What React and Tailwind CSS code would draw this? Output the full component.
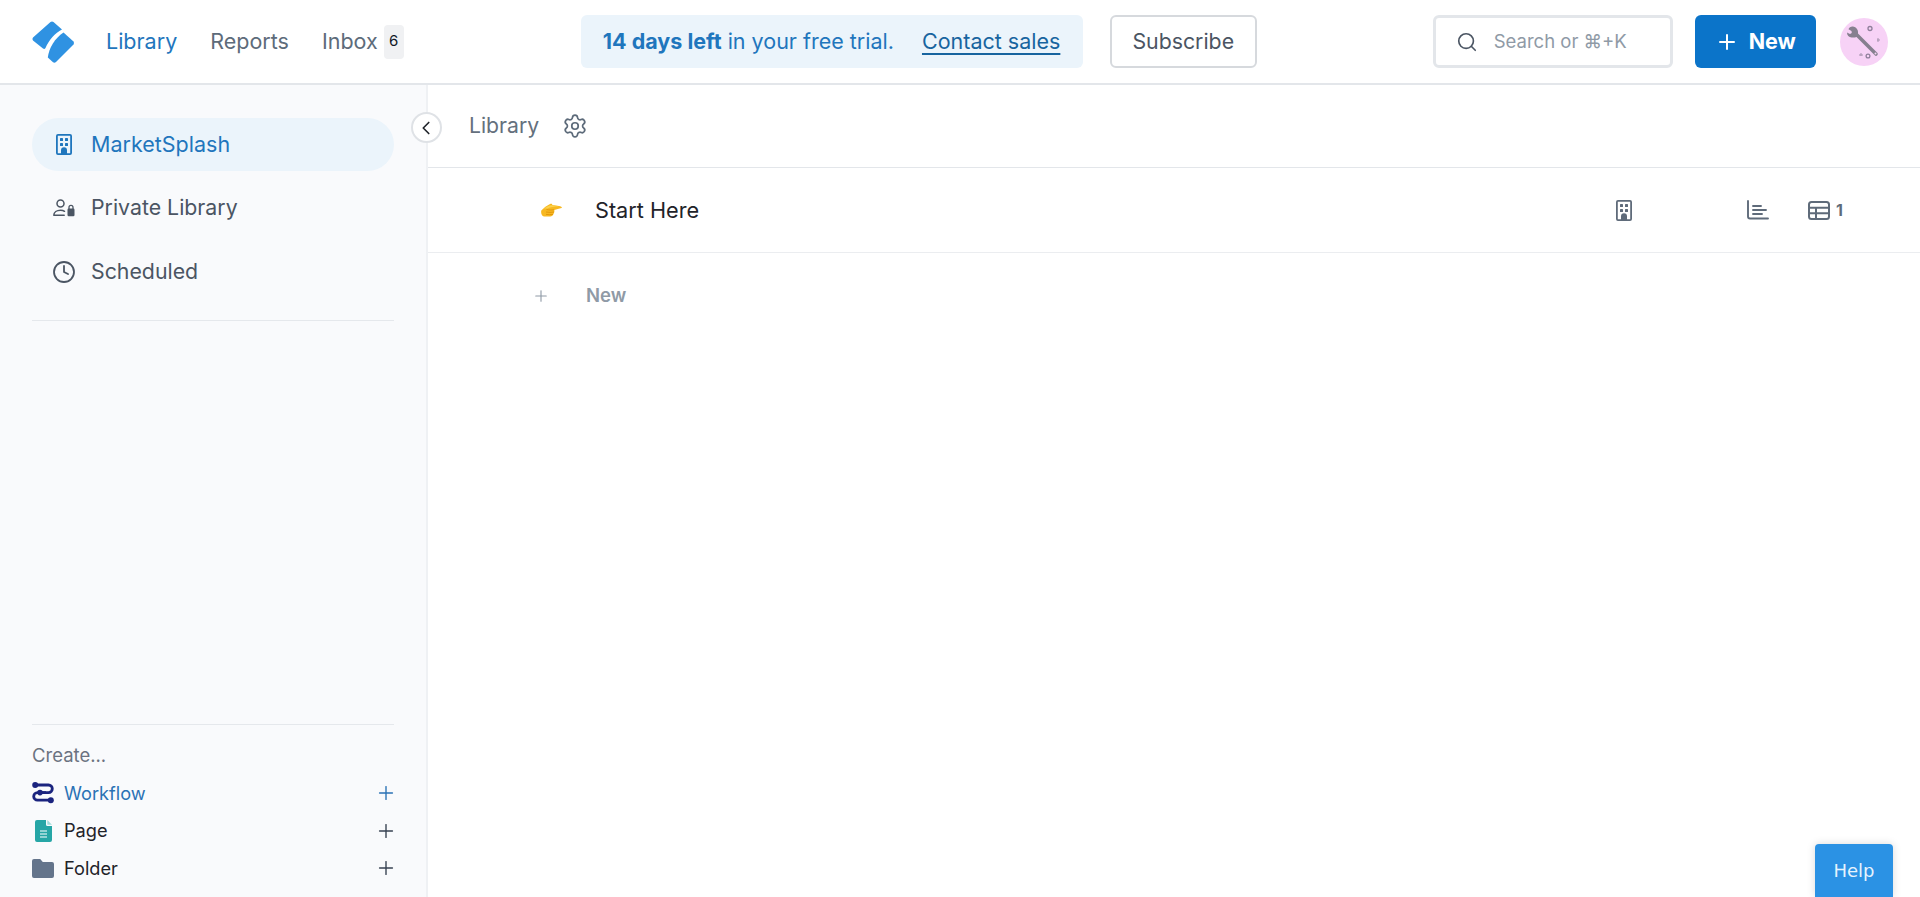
import React from 'react';
import { Plus, Search, Settings, ChevronLeft, Clock } from 'lucide-react';

const Logo = () => (
  <svg width="44" height="44" viewBox="0 0 44 44" fill="#2f92e2">
    <path d="M2 17.500 L19.500 2 Q21 1 22.500 2 L31 9.500 C24 13 18 20 14.500 28 Q13.500 29.500 12 28.500 L2 20.500 Q.8 19 2 17.500Z" />
    <path d="M32.500 12.500 L42.500 21.500 Q43.500 23 42.500 24.500 L25 42 Q23.500 43.200 22 42.200 L16.800 37.500 C18 28 24 18 32.500 12.500Z" />
  </svg>
);

const BuildingIcon = ({ className }) => (
  <svg className={className} viewBox="0 0 16 21" fill="currentColor">
    <path fillRule="evenodd" d="M2 0h12a2 2 0 0 1 2 2v17a2 2 0 0 1-2 2H2a2 2 0 0 1-2-2V2a2 2 0 0 1 2-2Zm0 1.800a.3.3 0 0 0-.2.2v17l.2.2h3v-3a3 3 0 0 1 6 0v3h3l.2-.2V2a.3.3 0 0 0-.2-.2H2Z" />
    <rect x="4" y="4" width="3" height="3" rx=".6" />
    <rect x="9" y="4" width="3" height="3" rx=".6" />
    <rect x="4" y="9" width="3" height="3" rx=".6" />
    <rect x="9" y="9" width="3" height="3" rx=".6" />
  </svg>
);

const PrivateIcon = () => (
  <svg width="22" height="18" viewBox="0 0 22 18" fill="none" stroke="#4b5563" strokeWidth="1.500">
    <circle cx="7.500" cy="4.500" r="3.500" />
    <path d="M.8 16.300c0-3 3-5 6.700-5 1.600 0 3 .3 4 1M.8 16.300h10.400" strokeLinecap="round" />
    <rect x="14.500" y="9.500" width="7" height="7.700" rx="1.200" fill="#4b5563" stroke="none" />
    <path d="M16 10V8.300a2 2 0 0 1 4 0V10" strokeWidth="1.300" />
  </svg>
);

const WorkflowIcon = () => (
  <svg width="22" height="22" viewBox="0 0 22 22" fill="none" stroke="#1a237e" strokeWidth="2.800">
    <path d="M3 3h13.500a3.800 3.800 0 0 1 0 7.600H8" />
    <path d="M14 10.600H5.500a3.800 3.800 0 0 0 0 7.600H19" />
    <circle cx="3.200" cy="3" r="3" fill="#1a237e" stroke="none" />
    <circle cx="18.800" cy="18.200" r="3" fill="#1a237e" stroke="none" />
    <circle cx="8" cy="10.600" r="2.800" fill="#1a237e" stroke="none" />
  </svg>
);

const PageIcon = () => (
  <svg width="17" height="22" viewBox="0 0 17 22">
    <path d="M2 0h9v4.500a1.500 1.500 0 0 0 1.500 1.500H17v14a2 2 0 0 1-2 2H2a2 2 0 0 1-2-2V2a2 2 0 0 1 2-2Z" fill="#26a6a6" />
    <path d="M12.300 0 17 4.700h-4.700Z" fill="#9fdcdc" />
    <path d="M5 11h7M5 14h7M5 17h7" stroke="#fff" strokeWidth="1.200" />
  </svg>
);

const FolderIcon = () => (
  <svg width="22" height="19" viewBox="0 0 22 19">
    <path d="M2 0h6.200l2.600 3H20a2 2 0 0 1 2 2v12a2 2 0 0 1-2 2H2a2 2 0 0 1-2-2V2a2 2 0 0 1 2-2Z" fill="#64748b" />
  </svg>
);

const ChartIcon = () => (
  <svg width="22" height="20" viewBox="0 0 22 20" fill="none" stroke="#5f6b7a" strokeWidth="1.900" strokeLinecap="round">
    <path d="M1 1v15.500a2 2 0 0 0 2 2h18" />
    <path d="M6 6h8M6 10h13M6 14h9" />
  </svg>
);

const TableIcon = () => (
  <svg width="22" height="19" viewBox="0 0 22 19" fill="none" stroke="#5f6b7a" strokeWidth="2">
    <rect x="1" y="1" width="20" height="17" rx="2.500" />
    <path d="M1 6.700h20M1 12.300h20M8 6.700V18" />
  </svg>
);

const PointingHand = () => (
  <svg width="21" height="14" viewBox="0 0 21 14">
    <path d="M.3 7.600 C2.500 5 6 2.500 9.500.8 C10.600.3 11.500 1 11.200 2 L18 3 C20.500 3.400 21.500 4.500 20.500 5 C18 5.800 15.500 6.500 13.300 6.900 C13.600 8.500 13.300 10 12.500 11 C12 12.500 10.800 13.400 9.300 13.500 L3.500 13.600 C1 13.500 -.4 10 .3 7.600Z" fill="#f7b821" />
    <path d="M3 5.500 C6 3.500 8 2.500 11 2.200 L18 3.200 C14 3.600 9 4 6.500 5.400Z" fill="#fbd24e" />
    <path d="M5.500 6.500c2.500.6 5 .6 7.500.2M5 9c2.500.5 5.500.5 8 0M5 11.400c2.300.4 4.800.4 7 0" stroke="#dd8f06" strokeWidth=".8" fill="none" />
  </svg>
);

const Avatar = () => (
  <div className="w-12 h-12 rounded-full bg-[#f7d2f6] flex items-center justify-center">
    <svg width="40" height="40" viewBox="0 0 40 40">
      <path d="M12 12 L32 32" stroke="#86808f" strokeWidth="3.600" strokeLinecap="round" />
      <path d="M9 4.500c-2.200-.2-3.800.8-4.500 2.700l3 1.800.3 2-1.800 1-3-1.400c0 2.800 1.800 4.800 4.600 5 2 .1 4-.4 5.700-.9.800-2 1-4.400.4-6.400C12.900 6.500 11.500 4.700 9 4.500Z" fill="#86808f" />
      <circle cx="31.500" cy="31.500" r="1" fill="#f7d2f6" />
      <circle cx="26" cy="6.500" r="2" fill="none" stroke="#8f7f9b" strokeWidth="1.300" />
      <circle cx="24" cy="34" r="1.900" fill="none" stroke="#8f7f9b" strokeWidth="1.300" />
      <path d="M33 18h3M34 16v4" stroke="#a593ad" strokeWidth="1" />
      <path d="M15 33h4M17 31v3" stroke="#a593ad" strokeWidth="1" />
    </svg>
  </div>
);

const CreateRow = ({ icon, label, active }) => (
  <div className="h-[37.500px] flex items-center">
    <div className="w-8 flex justify-center -ml-[5px] mr-[5px]">{icon}</div>
    <span className={`text-[18.200px] flex-1 ${active ? 'text-[#2a72b5]' : 'text-[#1f2329]'}`}>{label}</span>
    <Plus size={22} strokeWidth={1.500} className={`-mr-[3px] ${active ? 'text-[#2a72b5]' : 'text-[#374151]'}`} />
  </div>
);

export default function App() {
  return (
    <div className="h-[897px] w-[1920px] overflow-hidden flex flex-col bg-white font-['Inter',sans-serif] relative">
      <header className="h-[85px] shrink-0 border-b-2 border-[#e3e6ea] flex items-center pl-[31px] pr-8">
        <Logo />
        <nav className="flex items-center ml-[31px] text-[21.500px] text-[#5d6b7a]">
          <span className="text-[#1f76bd]">Library</span>
          <span className="ml-[33px]">Reports</span>
          <span className="ml-[33px]">Inbox</span>
          <span className="ml-[6px] w-5 h-[34px] rounded bg-[#f0f1f3] text-[#111827] text-[15px] flex items-center justify-center">6</span>
        </nav>
        <div className="ml-[177px] w-[502px] h-[53px] rounded-md bg-[#ebf4fb] flex items-center pl-[22px] text-[21.500px] text-[#1f76bd]">
          <span><b className="font-bold">14 days left</b> in your free trial.</span>
          <span className="ml-7 underline underline-offset-4 text-[#17649f]">Contact sales</span>
        </div>
        <button className="ml-[27px] w-[147px] h-[53px] rounded-md border-2 border-[#d6d9dd] text-[21.300px] text-[#4b5563]">Subscribe</button>
        <div className="ml-[176px] w-[240px] h-[53px] rounded-md border-[3px] border-[#e3e6ea] flex items-center pl-[20px] text-[18.500px] text-[#8f9aa6]">
          <Search size={22} strokeWidth={1.800} className="text-[#4b5563]" />
          <span className="ml-[16px]">Search or ⌘+K</span>
        </div>
        <button className="ml-[22px] w-[121px] h-[53px] rounded-md bg-[#0b74c9] text-white text-[21.500px] font-bold flex items-center justify-center gap-[10px]">
          <Plus size={24} strokeWidth={2} />
          New
        </button>
        <div className="ml-6"><Avatar /></div>
      </header>

      <div className="flex-1 flex min-h-0">
        <aside className="w-[428px] shrink-0 bg-[#f9fafc] border-r-2 border-[#eff1f4] flex flex-col px-8 pt-[33px]">
          <div className="h-[53px] rounded-full bg-[#ebf4fb] text-[#1f76bd] flex items-center pl-6">
            <BuildingIcon className="w-4 h-[21px]" />
            <span className="ml-[19px] text-[21.500px]">MarketSplash</span>
          </div>
          <div className="h-[64px] mt-[5px] flex items-center pl-[21px] text-[#4b5563]">
            <PrivateIcon />
            <span className="ml-[16px] text-[21.300px]">Private Library</span>
          </div>
          <div className="h-[64px] flex items-center pl-[20px] text-[#4b5563]">
            <Clock size={24} strokeWidth={1.800} />
            <span className="ml-[15px] text-[21.300px]">Scheduled</span>
          </div>
          <div className="mt-[16px] border-t border-[#e5e8ec]" />
          <div className="flex-1" />
          <div className="border-t border-[#e5e8ec] pt-[19px]">
            <div className="text-[18.500px] text-[#6b7280] leading-[22px] mb-[9px]">Create...</div>
            <CreateRow icon={<WorkflowIcon />} label="Workflow" active />
            <CreateRow icon={<PageIcon />} label="Page" />
            <CreateRow icon={<FolderIcon />} label="Folder" />
            <div className="h-[10px]" />
          </div>
        </aside>

        <main className="flex-1 min-w-0">
          <div className="h-[83px] border-b border-[#e3e6ea] flex items-center pl-[41px]">
            <span className="text-[21.200px] text-[#64707d]">Library</span>
            <Settings size={26} strokeWidth={1.600} className="ml-[23px] text-[#5d6b7a]" />
          </div>
          <div className="h-[85px] border-b border-[#ebedf0] flex items-center">
            <div className="ml-[113px]"><PointingHand /></div>
            <span className="ml-[33px] text-[21.700px] text-[#1f2329]">Start Here</span>
            <div className="flex-1" />
            <BuildingIcon className="w-4 h-[21px] text-[#5f6b7a]" />
            <div className="ml-[115px]"><ChartIcon /></div>
            <div className="ml-[39px]"><TableIcon /></div>
            <span className="ml-[6px] mr-[77px] text-[16px] font-bold text-[#5f6b7a]">1</span>
          </div>
          <div className="h-[85px] flex items-center">
            <Plus size={18} strokeWidth={1.500} className="ml-[104px] text-[#8f9aa6]" />
            <span className="ml-[36px] text-[18.500px] font-semibold text-[#8f9aa6]">New</span>
          </div>
        </main>
      </div>

      <button className="absolute left-[411px] top-[112px] w-[31px] h-[31px] rounded-full bg-white border-2 border-[#dfe2e6] flex items-center justify-center text-[#1f2329]">
        <ChevronLeft size={22} strokeWidth={1.800} className="-ml-[2px]" />
      </button>

      <button className="absolute right-[27px] bottom-0 w-[78px] h-[53px] rounded-t bg-[#2b92e4] text-[#e6f3fd] text-[18px] font-['DejaVu_Sans',sans-serif] shadow-[0_0_8px_rgba(0,0,0,0.15)]">Help</button>
    </div>
  );
}
